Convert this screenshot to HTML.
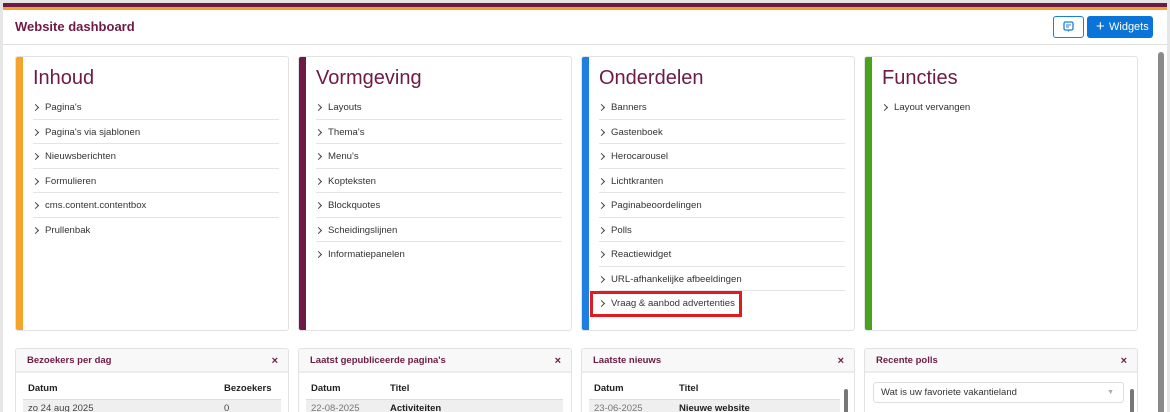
<!DOCTYPE html>
<html style="overflow:hidden"><head><style>
*{box-sizing:border-box;margin:0;padding:0}
html,body{width:1170px;height:412px;overflow:hidden}
body{background:#e6e6e6;font-family:"Liberation Sans",sans-serif;position:relative}
.panel{position:absolute;left:3px;top:3px;width:1164px;height:420px;background:#fff}
.s1{position:absolute;left:0;top:0;width:1164px;height:4px;background:#6d1a45}
.s2{position:absolute;left:0;top:4px;width:1164px;height:3px;background:#f5a02a}
.hdr{position:absolute;left:0;top:7px;width:1164px;height:35px;border-bottom:1px solid #e0e0e0}
.hdr h1{position:absolute;left:12px;top:9px;font-size:13px;font-weight:bold;color:#6d1a45}
.b1{position:absolute;left:1050px;top:6px;width:31px;height:22px;border:1px solid #1a7fd8;border-radius:3px;background:#fff}
.b2{position:absolute;left:1084px;top:6px;width:66px;height:22px;background:#0b74d8;border-radius:3px;color:#fff;font-size:11px;line-height:22px;padding-left:22px}
.b2 span{position:absolute;left:9px;top:0;font-size:15px}
.card{position:absolute;top:56px;width:274px;height:275px;border:1px solid #e2e2e2;border-radius:3px;background:#fff;overflow:hidden}
.card .bar{position:absolute;left:0;top:0;width:7px;height:100%}
.card h2{position:absolute;left:17px;top:10px;font-size:20px;font-weight:normal;color:#6d1a45}
.card ul{position:absolute;left:17px;top:38px;width:246px;list-style:none}
.card li{height:24.5px;border-bottom:1px solid #e4e4e4;font-size:9.6px;color:#333;line-height:25px;padding-left:12px;position:relative}
.card li:before{content:"";position:absolute;left:0;top:10px;width:4px;height:4px;border-right:1px solid #444;border-top:1px solid #444;transform:rotate(45deg)}
.card li:last-child{border-bottom:none}
.w{position:absolute;top:348px;width:274px;height:80px;border:1px solid #e2e2e2;border-radius:3px;background:#fff;overflow:hidden}
.w .wh{height:24px;background:#f8f8f8;border-bottom:2px solid #ececec;font-size:9.5px;font-weight:bold;color:#6d1a45;line-height:24px;padding-left:11px;position:relative}
.w .wh b{position:absolute;right:10px;top:0;font-size:11px;color:#6d1a45}
.th{position:absolute;top:34px;font-size:9.5px;font-weight:bold;color:#222}
.row{position:absolute;left:7px;top:50px;height:30px;background:#efefef;border-top:1px solid #ddd}
.td{position:absolute;top:54px;font-size:9.5px;color:#444}
.sb{position:absolute;left:1158px;top:52px;width:6px;height:370px;background:#8a8a8a;border-radius:3px}
</style></head><body>
<div class="panel">
<div class="s1"></div><div class="s2"></div>
<div class="hdr"><h1>Website dashboard</h1>
<div class="b1"><svg width="29" height="20" viewBox="0 0 29 20"><rect x="10" y="5" width="9" height="8" rx="1.5" fill="none" stroke="#1a7fd8" stroke-width="1.3"/><path d="M13.5 13l1 2 1-2" fill="#1a7fd8"/><path d="M12 8h5M12 10h3" stroke="#1a7fd8"/></svg></div>
<div class="b2"><span>+</span>Widgets</div></div>
</div>
<div class="sb"></div>

<div class="card" style="left:15px"><div class="bar" style="background:#f6a32b"></div><h2>Inhoud</h2><ul><li>Pagina's</li><li>Pagina's via sjablonen</li><li>Nieuwsberichten</li><li>Formulieren</li><li>cms.content.contentbox</li><li>Prullenbak</li></ul></div>
<div class="card" style="left:298px"><div class="bar" style="background:#6d1a45"></div><h2>Vormgeving</h2><ul><li>Layouts</li><li>Thema's</li><li>Menu's</li><li>Kopteksten</li><li>Blockquotes</li><li>Scheidingslijnen</li><li>Informatiepanelen</li></ul></div>
<div class="card" style="left:581px"><div class="bar" style="background:#1f7fe0"></div><h2>Onderdelen</h2><ul><li>Banners</li><li>Gastenboek</li><li>Herocarousel</li><li>Lichtkranten</li><li>Paginabeoordelingen</li><li>Polls</li><li>Reactiewidget</li><li>URL-afhankelijke afbeeldingen</li><li>Vraag &amp; aanbod advertenties</li></ul></div>
<div style="position:absolute;left:590px;top:291px;width:152px;height:26px;border:3px solid #e01b24"></div>
<div class="card" style="left:864px"><div class="bar" style="background:#4aa31d"></div><h2>Functies</h2><ul><li style="border:none">Layout vervangen</li></ul></div>

<div class="w" style="left:15px"><div class="wh">Bezoekers per dag<b>×</b></div>
<div class="th" style="left:12px">Datum</div><div class="th" style="left:208px">Bezoekers</div>
<div class="row" style="width:258px"></div><div class="td" style="left:12px">zo 24 aug 2025</div><div class="td" style="left:208px">0</div></div>
<div class="w" style="left:298px"><div class="wh">Laatst gepubliceerde pagina's<b>×</b></div>
<div class="th" style="left:12px">Datum</div><div class="th" style="left:91px">Titel</div>
<div class="row" style="width:257px"></div><div class="td" style="left:12px;color:#777">22-08-2025</div><div class="td" style="left:91px;font-weight:bold;color:#222">Activiteiten</div></div>
<div class="w" style="left:581px"><div class="wh">Laatste nieuws<b>×</b></div>
<div class="th" style="left:12px">Datum</div><div class="th" style="left:97px">Titel</div>
<div class="row" style="width:251px"></div><div class="td" style="left:12px;color:#777">23-06-2025</div><div class="td" style="left:97px;font-weight:bold;color:#222">Nieuwe website</div>
<div style="position:absolute;left:262px;top:40px;width:4px;height:40px;background:#777;border-radius:2px"></div></div>
<div class="w" style="left:864px"><div class="wh">Recente polls<b>×</b></div>
<div style="position:absolute;left:8px;top:33px;width:251px;height:21px;border:1px solid #ddd;border-radius:3px;font-size:9.5px;color:#333;line-height:19px;padding-left:7px">Wat is uw favoriete vakantieland<span style="position:absolute;right:9px;top:0;color:#aaa;font-size:7px">▼</span></div>
<div style="position:absolute;left:265px;top:40px;width:4px;height:40px;background:#777;border-radius:2px"></div></div>
</body></html>
